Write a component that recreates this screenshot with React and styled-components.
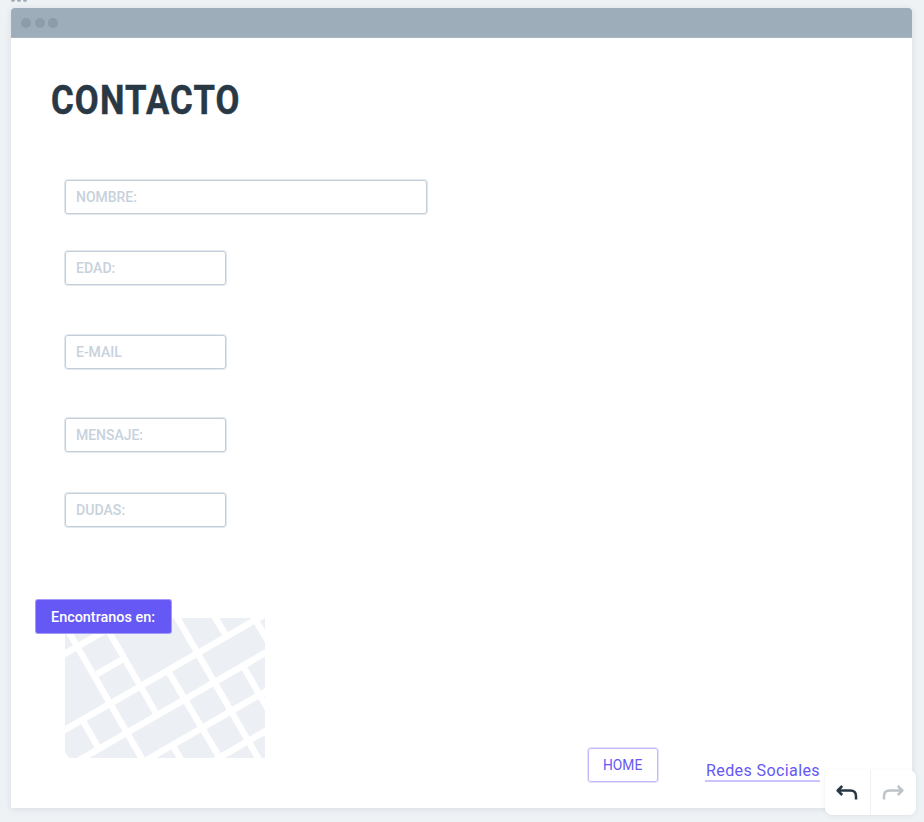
import React from "react";
import styled, { createGlobalStyle } from "styled-components";

const Global = createGlobalStyle`
  * { box-sizing: border-box; }
  body { margin: 0; background: #eef2f5; font-family: Roboto, "Liberation Sans", sans-serif; overflow: hidden; }
`;
const Canvas = styled.main`
  position: relative;
  width: 924px;
  height: 822px;
  padding: 8px 12px 14px 11px;
  overflow: hidden;
`;
const Grip = styled.div`
  position: absolute;
  top: 0;
  left: 11px;
  display: flex;
  gap: 2px;
`;
const GripDot = styled.i`
  width: 4px;
  height: 2px;
  border-radius: 0 0 2px 2px;
  background: #9dadb9;
`;
const Browser = styled.section`
  height: 800px;
  background: #fff;
  border-radius: 4px 4px 0 0;
  box-shadow: 0 1px 6px rgba(70, 95, 115, 0.14);
`;
const TitleBar = styled.header`
  height: 30px;
  padding-left: 10.4px;
  display: flex;
  align-items: center;
  gap: 3.3px;
  background: #9dadb9;
  border-radius: 4px 4px 0 0;
  box-shadow: inset 0 -1px #a8b6c1;
`;
const WindowDot = styled.i`
  width: 10px;
  height: 10px;
  border-radius: 50%;
  background: #8b9cab;
`;
const Content = styled.div`
  padding: 35px 0 0 39px;
`;
const Label = styled.span`
  display: inline-block;
  white-space: nowrap;
  transform-origin: left center;
  letter-spacing: ${(p) => p.$spacing || 0}px;
  transform: scaleX(${(p) => p.$stretch || 1});
`;
const Title = styled.h1`
  margin: 0;
  height: 54px;
  padding-left: 0.5px;
  font-size: 40.5px;
  line-height: 55px;
  font-weight: 700;
  color: #293845;
  -webkit-text-stroke: 0.5px #293845;
`;
const Form = styled.form`
  margin: 53px 0 0 15px;
  display: flex;
  flex-direction: column;
`;
const Field = styled.div`
  width: ${(p) => (p.$wide ? 362 : 161)}px;
  height: 34px;
  margin-bottom: ${(p) => p.$after}px;
  padding-left: 10.2px;
  border: 1px solid #c3ced8;
  border-radius: 3px;
  box-shadow: 0 0 0 1px #e1e8ee;
  font-size: 15px;
  line-height: 32px;
  font-weight: 500;
  color: #c7d2dc;
`;
const Location = styled.div`
  width: 230px;
  height: 159px;
  margin: 72px 0 0 -15px;
  padding: 19px 0 0 30px;
  position: relative;
`;
const MapArt = styled.svg`
  display: block;
`;
const Banner = styled.div`
  position: absolute;
  top: 1px;
  left: 1px;
  width: 135px;
  height: 33px;
  padding-left: 15px;
  border-radius: 2px;
  background: #6558f5;
  box-shadow: 0 0 0 1px #a39bf9;
  color: #fff;
  font-size: 15px;
  line-height: 34px;
  font-weight: 500;
`;
const Footer = styled.nav`
  display: flex;
  align-items: flex-start;
  margin: -10px 0 0 538px;
`;
const HomeButton = styled.a`
  width: 70px;
  height: 34px;
  padding-left: 14.3px;
  border: 1px solid #bfb9fb;
  border-radius: 3px;
  box-shadow: 0 0 0 1px #e4e1fe;
  color: #6558f5;
  font-size: 15px;
  line-height: 32px;
`;
const SocialLink = styled.a`
  width: 115px;
  height: 24px;
  margin: 10px 0 0 47px;
  padding-left: 0.5px;
  border-bottom: 2px solid #c9c4fc;
  color: #6558f5;
  font-size: 17px;
  line-height: 24px;
`;
const History = styled.div`
  position: absolute;
  left: 825px;
  top: 770px;
  width: 91px;
  height: 45px;
  display: grid;
  grid-template-columns: 46px 45px;
  border-radius: 7px;
  background: #fff;
  box-shadow: 0 1px 4px rgba(70, 95, 115, 0.1);
`;
const HistoryButton = styled.button`
  display: flex;
  align-items: center;
  justify-content: center;
  padding: 0 1px 0 0;
  border: 0;
  border-right: ${(p) => (p.$divided ? "1px solid #eef1f3" : "0")};
  background: none;
  color: ${(p) => (p.$muted ? "#bcc3c9" : "#293845")};
`;

const fields = [
  { text: "NOMBRE:", wide: true, after: 37, stretch: 0.93 },
  { text: "EDAD:", after: 50, stretch: 0.94 },
  { text: "E-MAIL", after: 49, stretch: 0.93 },
  { text: "MENSAJE:", after: 41, stretch: 0.93 },
  { text: "DUDAS:", after: 0, stretch: 0.94 },
];

const StreetMap = () => (
  <MapArt width="200" height="140" viewBox="0 0 200 140">
    <path fill="#eceff4" d="M0 0H200V140H4L0 134Z" />
    <g stroke="#fff" strokeWidth="6.4" fill="none">
      <path d="M-4 114L204 -6" />
      <path d="M12 143.5L204 32.7" />
      <path d="M72 147.5L204 71.3" />
      <path d="M148 143.3L204 111" />
      <path d="M-4 38L50 7" />
      <path d="M32 56L58 41" />
      <path d="M-2 4L80 146" />
      <path d="M36 0L91.5 96" />
      <path d="M110 -4L196 145" />
      <path d="M103.5 54L158.5 146" />
      <path d="M148 -4L162 19" />
      <path d="M187 -4L204 25" />
      <path d="M178 48L204 93" />
      <path d="M17 101L34 131" />
      <path d="M108 128L118 145" />
    </g>
  </MapArt>
);

const Arrow = ({ forward }) => (
  <svg width="22" height="18" viewBox="0 0 22 18" fill="none" stroke="currentColor" strokeWidth="2.5" strokeLinejoin="round">
    <path d={forward
      ? "M2 15.5V12.2Q2 6.5 7.7 6.5H20M15.8 2L20.3 6.5L15.8 11"
      : "M20 15.5V12.2Q20 6.5 14.3 6.5H2M6.2 2L1.7 6.5L6.2 11"} />
  </svg>
);

export default function App() {
  return (
    <>
      <Global />
      <Canvas>
        <Grip><GripDot /><GripDot /><GripDot /></Grip>
        <Browser>
          <TitleBar><WindowDot /><WindowDot /><WindowDot /></TitleBar>
          <Content>
            <Title><Label $stretch={0.855} $spacing={1.4}>CONTACTO</Label></Title>
            <Form>
              {fields.map((f) => (
                <Field key={f.text} $wide={f.wide} $after={f.after}>
                  <Label $stretch={f.stretch}>{f.text}</Label>
                </Field>
              ))}
            </Form>
            <Location>
              <StreetMap />
              <Banner><Label $stretch={0.96}>Encontranos en:</Label></Banner>
            </Location>
            <Footer>
              <HomeButton><Label $stretch={0.92}>HOME</Label></HomeButton>
              <SocialLink><Label $spacing={0.4} $stretch={0.945}>Redes Sociales</Label></SocialLink>
            </Footer>
          </Content>
        </Browser>
        <History>
          <HistoryButton $divided aria-label="Deshacer"><Arrow /></HistoryButton>
          <HistoryButton $muted aria-label="Rehacer"><Arrow forward /></HistoryButton>
        </History>
      </Canvas>
    </>
  );
}
